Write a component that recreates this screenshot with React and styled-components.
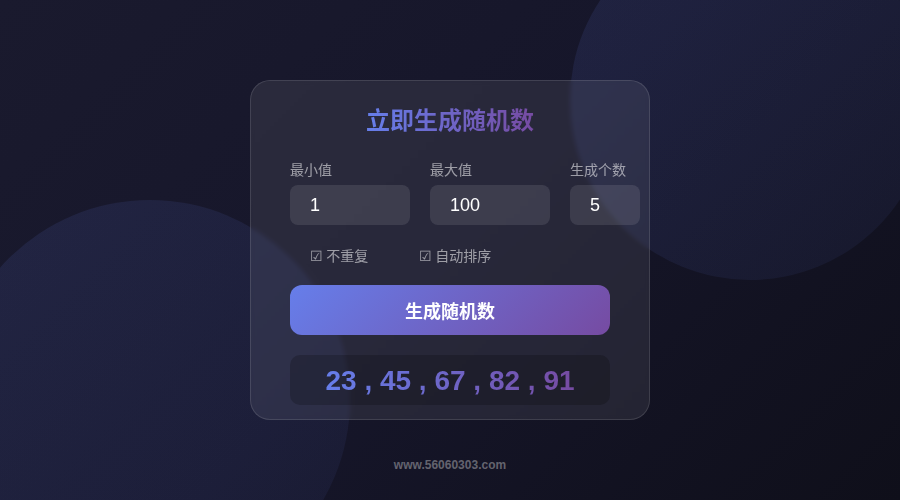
import React from "react";
import styled, { createGlobalStyle } from "styled-components";

const GlobalStyle = createGlobalStyle`
  body {
    margin: 0;
    font-family: "Liberation Sans", "Noto Sans CJK SC", sans-serif;
  }
`;

const Page = styled.div`
  position: relative;
  width: 900px;
  height: 500px;
  overflow: hidden;
  background: linear-gradient(135deg, #1a1a2e 0%, #16162a 50%, #0f0f1a 100%);
  display: flex;
  flex-direction: column;
  align-items: center;
  padding-top: 80px;
  box-sizing: border-box;
`;

const Circle = styled.div`
  position: absolute;
  border-radius: 50%;
  width: ${(p) => p.size}px;
  height: ${(p) => p.size}px;
  left: ${(p) => p.x - p.size / 2}px;
  top: ${(p) => p.y - p.size / 2}px;
  background: linear-gradient(
    135deg,
    rgba(102, 126, 234, 0.12),
    rgba(102, 126, 234, 0.06)
  );
`;

const Card = styled.div`
  position: relative;
  width: 400px;
  height: 340px;
  box-sizing: border-box;
  padding: 23px 39px 0;
  border-radius: 20px;
  background: rgba(255, 255, 255, 0.08);
  border: 1px solid rgba(255, 255, 255, 0.12);
  backdrop-filter: blur(2px);
  display: flex;
  flex-direction: column;
`;

const Title = styled.h1`
  margin: 0 0 28px;
  font-family: "Noto Sans CJK SC", sans-serif;
  font-size: 24px;
  line-height: 29px;
  font-weight: 700;
  text-align: center;
  background: linear-gradient(90deg, #667eea, #764ba2);
  -webkit-background-clip: text;
  background-clip: text;
  color: transparent;
  align-self: center;
`;

const Fields = styled.div`
  display: flex;
  gap: 20px;
`;

const Field = styled.div`
  display: flex;
  flex-direction: column;
  gap: 7px;
  width: ${(p) => p.width}px;
  flex-shrink: 0;
`;

const Label = styled.label`
  font-family: "Noto Sans CJK SC", sans-serif;
  font-size: 14px;
  line-height: 17px;
  color: rgba(255, 255, 255, 0.55);
  white-space: nowrap;
`;

const Input = styled.input`
  height: 40px;
  box-sizing: border-box;
  border: none;
  outline: none;
  border-radius: 8px;
  padding: 0 20px;
  background: rgba(255, 255, 255, 0.1);
  color: #fff;
  font-family: "Liberation Sans", sans-serif;
  font-size: 18px;
  width: 100%;
`;

const Options = styled.div`
  display: flex;
  gap: 51px;
  padding: 0 20px;
  margin: 21px 0 21px;
`;

const Option = styled.span`
  font-family: "Noto Sans CJK SC", sans-serif;
  font-size: 14px;
  line-height: 18px;
  color: rgba(255, 255, 255, 0.55);
`;

const Button = styled.button`
  height: 50px;
  border: none;
  border-radius: 12px;
  background: linear-gradient(135deg, #667eea 0%, #764ba2 100%);
  color: #fff;
  font-family: "Noto Sans CJK SC", sans-serif;
  font-size: 18px;
  font-weight: 700;
  cursor: pointer;
`;

const Result = styled.div`
  margin-top: 20px;
  height: 50px;
  border-radius: 10px;
  background: rgba(0, 0, 0, 0.2);
  display: flex;
  align-items: center;
  justify-content: center;
  padding-top: 2px;
  box-sizing: border-box;
`;

const Numbers = styled.span`
  font-family: "Liberation Sans", sans-serif;
  font-size: 28px;
  font-weight: 700;
  background: linear-gradient(90deg, #667eea, #764ba2);
  -webkit-background-clip: text;
  background-clip: text;
  color: transparent;
`;

const Footer = styled.div`
  margin-top: 38px;
  font-family: "Liberation Sans", sans-serif;
  font-size: 12px;
  font-weight: 700;
  color: rgba(255, 255, 255, 0.35);
  position: relative;
`;

const fields = [
  { label: "最小值", value: "1", width: 120 },
  { label: "最大值", value: "100", width: 120 },
  { label: "生成个数", value: "5", width: 70 },
];

const App = () => {
  return (
    <Page>
      <GlobalStyle />
      <Circle size={360} x={750} y={100} />
      <Circle size={400} x={150} y={400} />
      <Card>
        <Title>立即生成随机数</Title>
        <Fields>
          {fields.map((f) => (
            <Field key={f.label} width={f.width}>
              <Label>{f.label}</Label>
              <Input defaultValue={f.value} />
            </Field>
          ))}
        </Fields>
        <Options>
          <Option>☑ 不重复</Option>
          <Option>☑ 自动排序</Option>
        </Options>
        <Button>生成随机数</Button>
        <Result>
          <Numbers>23 , 45 , 67 , 82 , 91</Numbers>
        </Result>
      </Card>
      <Footer>www.56060303.com</Footer>
    </Page>
  );
};

export default App;
